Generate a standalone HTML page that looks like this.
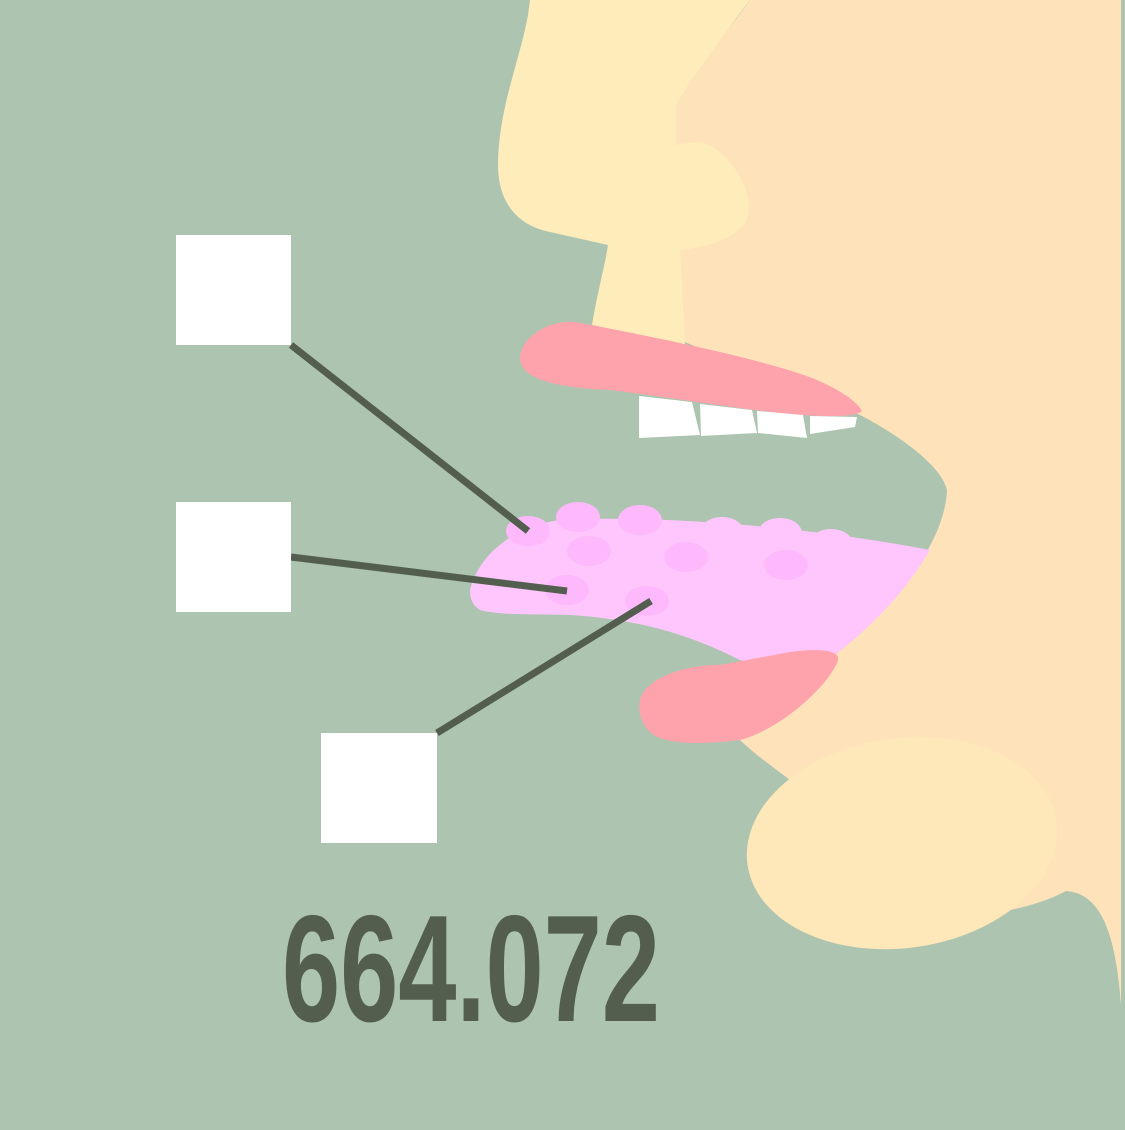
<!DOCTYPE html>
<html><head><style>html,body{margin:0;padding:0;background:#adc4b0}svg{display:block}</style></head><body>
<svg width="1125" height="1130" viewBox="0 0 1125 1130" xmlns="http://www.w3.org/2000/svg">
<rect width="1125" height="1130" fill="#adc4b0"/>
<path d="M750,0 L1121,0 L1121,1005 C1115,920 1095,893 1066,891 C1040,905 1010,910 1000,912 L900,900 L790,780 C770,765 750,750 740,740 L840,650 C900,600 945,540 947,490 C940,460 880,425 860,415 L680,340 L676,250 L676,100 C700,60 730,30 750,0 Z" fill="#fee3ba"/>
<path d="M530,0 L750,0 C720,40 690,80 676,105 L676,145 C690,143 700,140 710,145 C740,165 752,195 748,215 C742,240 700,248 680,250 L685,345 L592,325 C598,290 605,265 608,245 L550,232 C515,225 498,200 498,165 C498,110 520,60 528,15 Z" fill="#feecbb"/>
<path d="M575,322 C640,334 760,358 812,378 C842,390 858,403 862,411 C855,418 820,417 780,413 C720,406 660,396 610,390 C560,388 520,380 520,358 C522,335 550,320 575,322 Z" fill="#fea3ab"/>
<g fill="#fff">
<polygon points="639,396 692,402 700,435 639,438"/>
<polygon points="700,404 752,410 757,433 701,436"/>
<polygon points="757,411 803,415 807,438 758,433"/>
<polygon points="810,416 857,417 855,427 810,434"/>
</g>
<path d="M470,590 C480,550 520,525 560,520 C650,515 800,525 930,550 C900,600 860,640 800,680 L740,660 C700,640 650,620 570,615 C520,614 500,615 480,610 C472,605 470,598 470,590 Z" fill="#fec6fc"/>
<g fill="#feb9fc">
<ellipse cx="528" cy="531" rx="22" ry="15"/>
<ellipse cx="578" cy="517" rx="22" ry="15"/>
<ellipse cx="640" cy="520" rx="22" ry="15"/>
<ellipse cx="589" cy="551" rx="22" ry="15"/>
<ellipse cx="686" cy="557" rx="22" ry="15"/>
<ellipse cx="786" cy="565" rx="22" ry="15"/>
<ellipse cx="567" cy="590" rx="22" ry="15"/>
<ellipse cx="647" cy="601" rx="22" ry="15"/>
</g>
<g fill="#fec6fc">
<ellipse cx="722" cy="532" rx="22" ry="15"/>
<ellipse cx="780" cy="533" rx="22" ry="15"/>
<ellipse cx="831" cy="544" rx="22" ry="15"/>
</g>
<path d="M640,700 C645,680 680,665 720,665 L790,652 C820,648 840,650 838,660 C830,685 780,730 740,740 C700,745 660,745 648,730 C640,720 638,710 640,700 Z" fill="#fea3ab"/>
<ellipse cx="902" cy="843" rx="156" ry="105" transform="rotate(-8 902 843)" fill="#fee7b8"/>
<g stroke="#535e4f" stroke-width="7">
<line x1="291" y1="345" x2="528" y2="531"/>
<line x1="291" y1="557" x2="567" y2="591"/>
<line x1="437" y1="733" x2="651" y2="601"/>
</g>
<g fill="#fff">
<rect x="176" y="235" width="115" height="110"/>
<rect x="176" y="502" width="115" height="110"/>
<rect x="321" y="733" width="116" height="110"/>
</g>
<text x="282" y="1021" font-family="Liberation Sans, sans-serif" font-weight="bold" font-size="152" fill="#535e4f" textLength="378" lengthAdjust="spacingAndGlyphs">664.072</text>
</svg>
</body></html>
